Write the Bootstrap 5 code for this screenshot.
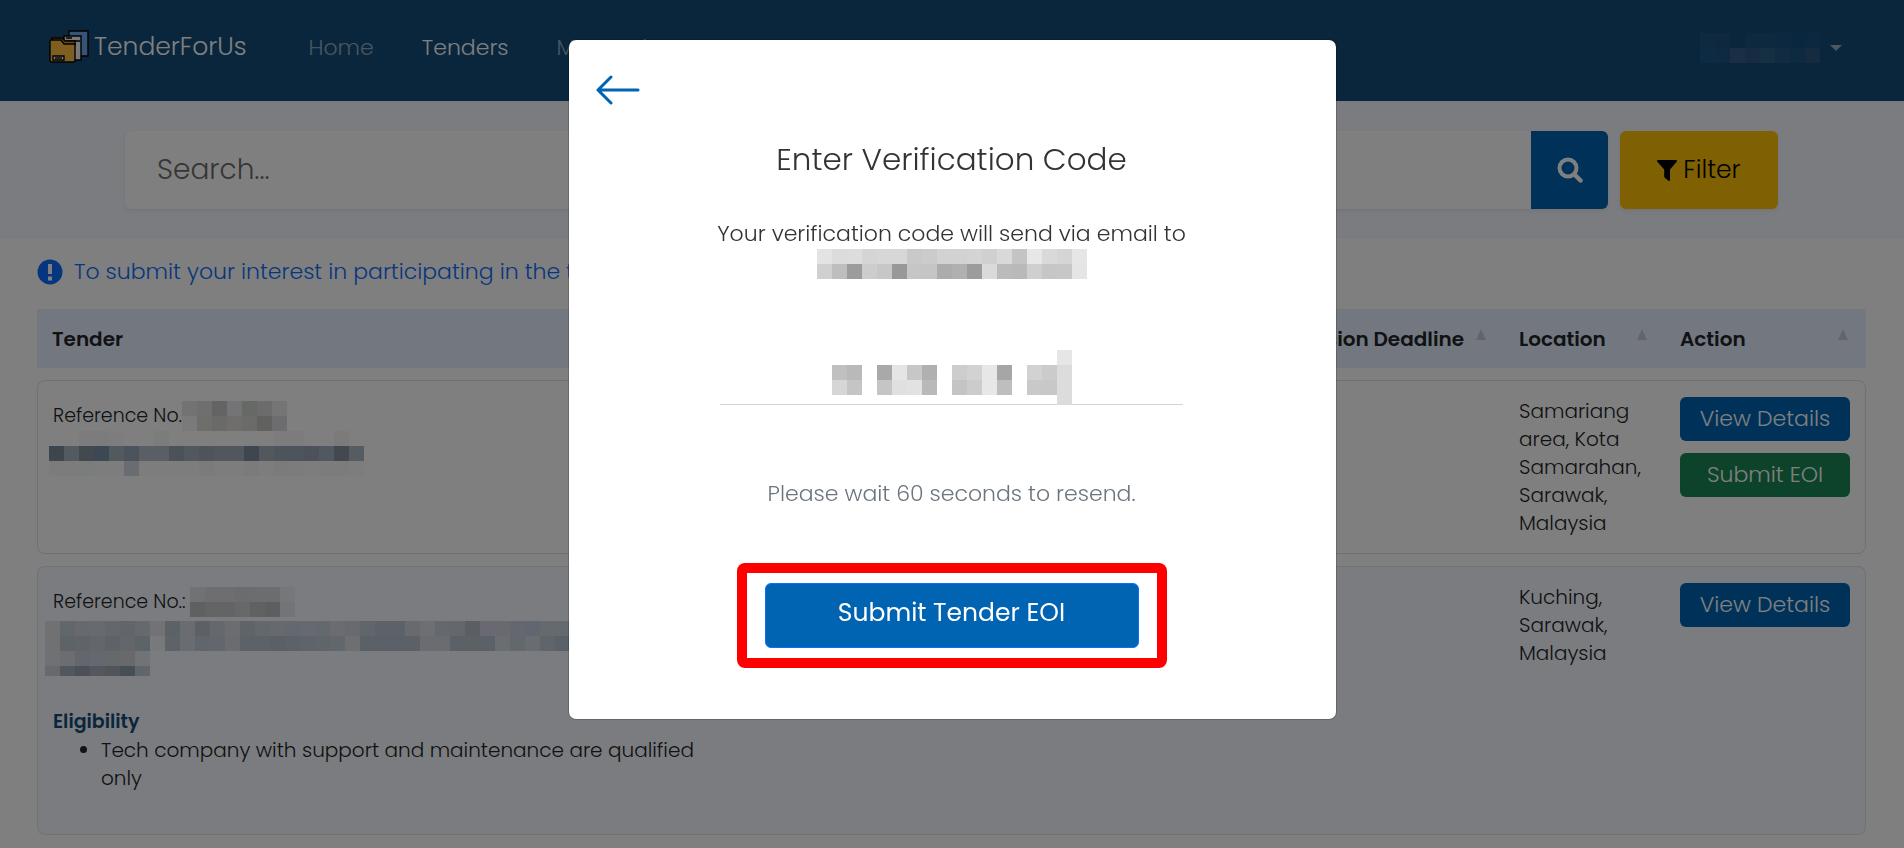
<!DOCTYPE html>
<html lang="en">
<head>
<meta charset="utf-8">
<meta name="viewport" content="width=device-width, initial-scale=1">
<title>TenderForUs</title>
<link href="https://cdn.jsdelivr.net/npm/bootstrap@5.3.0/dist/css/bootstrap.min.css" rel="stylesheet">
<style>
  :root { --tf-navy: #124c7a; --tf-blue: #0064b2; --tf-band: #f6f8fe; --tf-head: #e6eefe; }
  body { font-family: Poppins, Inter, sans-serif; font-size: 20px; font-weight: 300; line-height: 28px; color: #212529; }
  .mosaic { display: block; flex: none; }
  .btn { --bs-btn-border-radius: 6px; --bs-btn-font-weight: 300; }

  .topbar { background: var(--tf-navy); min-height: 101px; padding: 0 46px 8px 49px; }
  .topbar .navbar-brand { font-size: 25px; line-height: 32px; margin-right: 46px; gap: 5px; }
  .topbar .nav-link { font-size: 22px; font-weight: 300; --bs-navbar-nav-link-padding-x: 16px; padding-top: 9px; padding-bottom: 7px; }
  .topbar .navbar-nav { gap: 16px; }

  .search-band { background: var(--tf-band); padding: 30px 126px 30px 125px; }
  .search-band .form-control { height: 78px; font-size: 28px; font-weight: 300; padding-left: 32px; border: 0; border-radius: 8px 0 0 8px; }
  .search-band .form-control::placeholder { color: #6c6c6c; }
  .btn-search { --bs-btn-bg: var(--tf-blue); --bs-btn-color: #fff; width: 77px; padding: 0; }
  .btn-filter { font-size: 25px; width: 158px; gap: 6px; }

  .notice { font-size: 22px; color: #0d6efd; gap: 11px; padding: 19px 37px 11px; }

  .tender-list { padding: 0 38px 0 37px; }
  .tenders { table-layout: fixed; width: 100%; border-collapse: separate; border-spacing: 0 12px; margin: 0; }
  .tenders th { background: var(--tf-head); height: 59px; padding: 0 18px 0 15px; font-weight: 600; }
  .tenders td { vertical-align: top; padding: 16px 15px; border: solid #dfe2e6; border-width: 1px 0; }
  .tenders td:first-child { border-left-width: 1px; border-radius: 8px 0 0 8px; }
  .tenders td:last-child { border-right-width: 1px; border-radius: 0 8px 8px 0; }
  .tenders .tinted td { background: var(--tf-band); height: 269px; }
  .tenders .btn { font-size: 22px; line-height: 30px; border: 0; padding: 7px; }
  .col-tender { width: 37%; } .col-deadline { width: 13%; } .col-place { width: 161px; } .col-action { width: 201px; }
  .sorter { border: solid transparent; border-width: 0 5px 11px; border-bottom-color: #c9cbd1; margin-bottom: 8px; }
  .ref-no { font-size: 19px; }
  .bleed { margin-left: -8px; overflow: hidden; }
  .tinted .bleed { height: 55px; }
  .eligible { color: var(--tf-navy); font-size: 19px; font-weight: 600; }
  .btn-view { --bs-btn-bg: var(--tf-blue); --bs-btn-color: #fff; }

  .modal-dialog { max-width: 769px; margin-top: 39px; }
  .modal-content { border-radius: 8px; padding: 35px 27px 51px 26px; color: #333; }
  .modal-content h1 { font-size: 31px; line-height: 36px; font-weight: 300; margin: 36px 0 42px; }
  .modal-content p { font-size: 22px; line-height: 30px; }
  .code-field { width: 463px; margin: 71px 0 74px; }
  .code-field input { height: 55px; border: 0; border-bottom: 1px solid #ced4da; border-radius: 0; }
  .callout { border: 10px solid #f00; border-radius: 8px; padding: 10px 18px; margin-top: 54px; width: 430px; }
  .btn-eoi { --bs-btn-bg: var(--tf-blue); --bs-btn-border-color: #0d6efd; --bs-btn-color: #fff; --bs-btn-font-weight: 400; font-size: 25px; line-height: 32px; padding: 13px 12px 18px; }
</style>
</head>
<body class="modal-open overflow-hidden">

<nav class="navbar navbar-expand navbar-dark topbar">
  <a class="navbar-brand d-flex align-items-center" href="#">
    <svg width="40" height="34" viewBox="0 0 40 34" stroke="#000" stroke-width="1.4" aria-hidden="true">
      <path d="M20 1h19v25H20z" fill="#6fa8ee"/>
      <path d="M15 6h17v24H15z" fill="#f4f1f6"/>
      <path d="M17 8h6M17 11h14" />
      <path d="M3 10V8h10l3 3h10v4H3z" fill="#e58a14"/>
      <path d="M2 10h10l3 4h11v17l-1 1H2l-1-1V11z" fill="#fdbf3e"/>
      <path d="M4 26h11v4H4z" fill="#fff"/><path d="M6 28h7"/>
    </svg>
    <span>TenderForUs</span>
  </a>
  <ul class="navbar-nav me-auto">
    <li class="nav-item"><a class="nav-link" href="#">Home</a></li>
    <li class="nav-item"><a class="nav-link active" href="#">Tenders</a></li>
    <li class="nav-item"><a class="nav-link" href="#">My Tenders</a></li>
  </ul>
  <ul class="navbar-nav">
    <li class="nav-item"><a class="nav-link dropdown-toggle d-flex align-items-center gap-1" href="#" aria-label="Account"><svg class="mosaic" data-cell="15" data-rows="1a5580 20507e 124c78 185280 185280 165080 124e7c 165080,1a5684 205284 365f88 2e5884 2a6080 245684 1a5482 285680"></svg></a></li>
  </ul>
</nav>

<form class="search-band d-flex gap-2">
  <div class="input-group shadow-sm rounded me-1">
    <input type="search" class="form-control" placeholder="Search..." aria-label="Search tenders">
    <button type="button" class="btn btn-search" aria-label="Search">
      <svg width="26" height="26" viewBox="0 0 26 26" fill="none" stroke="#fff" stroke-width="4"><circle cx="11" cy="11" r="8.5"/><path d="M17.5 17.5l6 6" stroke-width="4.5" stroke-linecap="round"/></svg>
    </button>
  </div>
  <button type="button" class="btn btn-warning btn-filter shadow-sm flex-shrink-0 d-flex align-items-center justify-content-center">
    <svg width="20" height="21" viewBox="0 0 20 21" aria-hidden="true"><path d="M1 0h18c1 0 1.300 1 .7 1.700L13 9.500V20c0 .9-.8 1.200-1.500.7L8 18c-.6-.5-.8-.8-.8-1.500v-7L.3 1.700C-.3 1 0 0 1 0z"/></svg>
    Filter
  </button>
</form>

<div class="notice d-flex align-items-center">
  <svg width="26" height="26" viewBox="0 0 26 26" aria-hidden="true"><circle cx="13" cy="13" r="12.500" fill="#0d6efd"/><path d="M11 5h4v10h-4zM11 17.500h4v4h-4z" fill="#fff"/></svg>
  <span>To submit your interest in participating in the tender</span>
</div>

<main class="tender-list">
  <table class="tenders">
    <thead>
      <tr>
        <th class="col-tender" scope="col">Tender</th>
        <th aria-hidden="true"></th>
        <th class="col-deadline" scope="col"><div class="d-flex align-items-center justify-content-end gap-2 text-nowrap">Submission Deadline <span class="sorter ms-1"></span></div></th>
        <th class="col-place" scope="col"><div class="d-flex align-items-center justify-content-between">Location <span class="sorter"></span></div></th>
        <th class="col-action" scope="col"><div class="d-flex align-items-center justify-content-between">Action <span class="sorter"></span></div></th>
      </tr>
    </thead>
    <tbody>
      <tr>
        <td>
          <div class="ref-no d-flex align-items-center pt-1">Reference No.<svg class="mosaic" data-cell="15" data-rows="e6e6e6 dcdfdc c9c9cb e8e9ec cfd2cf d8d8d8 ebebed,f4f4f4 dcdcd6 d4d4d0 dedcd8 d6d8d4 c2c2c0 dadbe0"></svg></div>
          <a href="#" aria-label="Tender title" class="bleed d-block ps-1"><svg class="mosaic" data-cell="15" data-rows="- - f8f8f8 f8f8f8 fafafa - - f6f8f8 - - - - - - - f9f9f9 f9f9f9 - - f6f6f6 -,7a8c98 a6b6c0 84949f 7890a8 a6b4be 97a8ba b6bfcb b4bfca 9aa5b3 a3b1bd 9ea9b6 a3afb9 a2aeb8 7c8f9f a6b1ba 9ca8b7 9ca8ba 9ba3b3 a2b1bf 88929f aab9c4,f9f9f9 f9f9f9 f6f9f8 fafafa fafafa d3d8e2 fafafa fafafa fafafa fafafa f6f6f6 fafafa fafafa f6f6f6 fafafa f6f6f6 f6f8f6 fafafa f8f8f8 f8f8f8 fafafa"></svg></a>
        </td>
        <td></td>
        <td>2024.</td>
        <td>Samariang area, Kota Samarahan, Sarawak, Malaysia</td>
        <td><div class="d-grid gap-2"><button type="button" class="btn btn-view">View Details</button><button type="button" class="btn btn-success mt-1">Submit EOI</button></div></td>
      </tr>
      <tr class="tinted">
        <td>
          <div class="ref-no d-flex align-items-center gap-1 pt-1">Reference No.: <svg class="mosaic" data-cell="15" data-rows="e2e4e8 dcdde0 dcdde1 d8d9dc d9dadc d9dadc eeeff3,bfc2c3 c6c8c9 c6c8ca ced0d2 c0c3c4 b9bdc0 e6e9ef"></svg></div>
          <a href="#" aria-label="Tender title" class="bleed d-block mt-1"><svg class="mosaic" data-cell="15" data-rows="dfe2e7 c4ced8 d0d3df ccd6de c8cfda c0ccd4 ccd2dc e4e7ec b8c4cc d4d8e4 b9c3cc c9d2dc d9dbe1 bcc8d0 c7d0da ccd5dd c8d3df ccd3df c6d3dc d4d8e4 d1d4de c2cdd8 b8c5d0 b8c4cf d0d4dd dddfe4 c9d3dd c9d1d9 b6bfc8 d2d5e2 d2d5e2 c8cfdd c2cee0 c8d4dc c8d4dc c8d4dc c8d4dc c8d4dc c8d4dc,dfe2e7 bbc6cf bfc9d3 c6ced8 bcc7d2 c6ced9 b9c8d1 f0f2f7 bac6d0 d2d8e2 c1cdd8 c7cfdb d7d9e1 b8c5cf b9c4ce b5c0ca b9c5cf bdc9d2 c0cad4 c5cfda dcdee4 b9c3ce b7c3d3 b9c2d2 b7c2cc d4d8e3 d4d8e3 b9c3ce b9c3cd b9c3ce d4dae4 c4d1d9 d2d8e2 bfcbd4 b4c2d4 c0ccd4 c0ccd4 c0ccd4 c0ccd4,e0e2e8 d7dae1 c6ccd8 cad2df ccd2d5 cfd2d6 e4e6ec,d0d3dd a5afbc 96a3af a9afbc a2abb4 8f9fac c0ced6"></svg></a>
          <div class="eligible mt-4 pt-2">Eligibility</div>
          <ul class="mb-0 ps-5"><li>Tech company with support and maintenance are qualified only</li></ul>
        </td>
        <td></td>
        <td></td>
        <td>Kuching, Sarawak, Malaysia</td>
        <td><div class="d-grid"><button type="button" class="btn btn-view">View Details</button></div></td>
      </tr>
    </tbody>
  </table>
</main>

<div class="modal show d-block" tabindex="-1" role="dialog" aria-labelledby="verify-title">
  <div class="modal-dialog">
    <div class="modal-content">
      <button type="button" class="btn p-0 border-0 align-self-start lh-1" aria-label="Back">
        <svg class="d-block" width="46" height="30" viewBox="0 0 46 30" fill="none" stroke="#0064b2" stroke-width="3" stroke-linecap="round" stroke-linejoin="round"><path d="M16 2L3 15l13 13M3 15h40"/></svg>
      </button>
      <div class="d-flex flex-column align-items-center text-center">
        <h1 id="verify-title">Enter Verification Code</h1>
        <p class="mb-0">Your verification code will send via email to</p>
        <svg class="mosaic" data-cell="15" data-rows="e3e3e3 dcdcdc dddddd d5d5d5 d7d7d7 d7d7d7 c9c9c9 cbcbcb d2d2d2 d2d2d2 d4d4d4 d0d0d0 d9d9d9 c4c4c4 e7e7e7 d9d9d9 d5d5d5 e6e6e6,d0d0d0 bebebe 9c9c9c cdcdcd c7c7c7 989898 c6c6c6 c5c5c5 acacac b0b0b0 9c9c9c dadada bbbbbb b9b9b9 cfcfcf c6c6c6 c7c7c7 e5e5e5"></svg>
        <div class="code-field position-relative">
          <input type="text" class="form-control" aria-label="Verification code">
          <div class="position-absolute top-0 start-0 end-0 bottom-0 d-flex justify-content-center overflow-hidden pe-none">
            <svg class="mosaic" data-cell="15" data-rows="- - - - - - - - - - - - - - - e6e6e6,c0c0c0 b9b9b9 - a9a9a9 e5e5e5 c7c7c7 b0b0b0 - cdcdcd d2d2d2 e7e7e7 a6a6a6 - d2d2d2 cbcbcb dcdcdc,d6d6d6 c5c5c5 - c5c5c5 e0e0e0 e2e2e2 b9b9b9 - c4c4c4 cccccc e7e7e7 bebebe - c9c9c9 c8c8c8 dcdcdc,- - - - - - - - - - - - - - - dcdcdc"></svg>
          </div>
        </div>
        <p class="mb-0 text-secondary">Please wait 60 seconds to resend.</p>
        <div class="callout d-grid"><button type="button" class="btn btn-eoi">Submit Tender EOI</button></div>
      </div>
    </div>
  </div>
</div>
<div class="modal-backdrop show"></div>

<script src="https://cdn.jsdelivr.net/npm/bootstrap@5.3.0/dist/js/bootstrap.bundle.min.js"></script>
<script>
  // Paints redacted values as a grid of square cells; "-" leaves a cell empty.
  document.querySelectorAll('.mosaic').forEach(function (svg) {
    var s = +svg.dataset.cell;
    var rows = svg.dataset.rows.split(',').map(function (r) { return r.split(' '); });
    svg.setAttribute('width', s * rows[0].length);
    svg.setAttribute('height', s * rows.length);
    svg.setAttribute('shape-rendering', 'crispEdges');
    svg.innerHTML = rows.map(function (r, y) {
      return r.map(function (c, x) {
        return c === '-' ? '' : '<rect x="' + x * s + '" y="' + y * s + '" width="' + s + '" height="' + s + '" fill="#' + c + '"/>';
      }).join('');
    }).join('');
  });
</script>
</body>
</html>
